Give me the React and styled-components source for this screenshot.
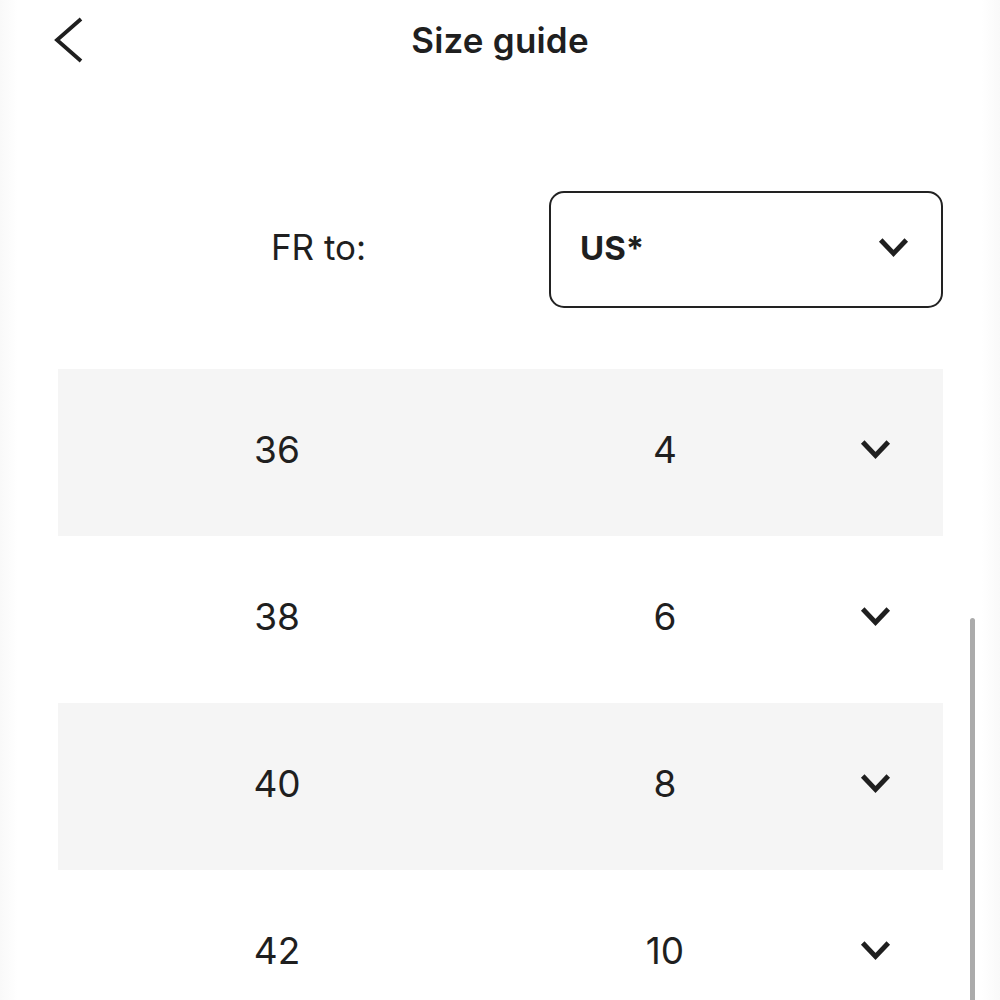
import React from "react";
import styled, { createGlobalStyle } from "styled-components";

const GlobalStyle = createGlobalStyle`
  html, body {
    margin: 0;
    padding: 0;
    background: #ffffff;
    font-family: Inter, "Noto Sans", sans-serif;
    color: #1f1f1f;
  }
`;

const Screen = styled.div`
  width: 1000px;
  height: 1000px;
  overflow: hidden;
  position: relative;
  background: linear-gradient(
    to right,
    #f9f9f9 0px,
    #ffffff 18px,
    #ffffff 982px,
    #f9f9f9 1000px
  );
`;

const Header = styled.header`
  height: 80px;
  display: grid;
  grid-template-columns: 120px 1fr 120px;
  align-items: center;
`;

const BackButton = styled.button`
  border: none;
  background: none;
  padding: 0 0 0 52px;
  height: 80px;
  display: flex;
  align-items: center;
  cursor: pointer;
  color: #1f1f1f;
`;

const Title = styled.h1`
  margin: 0;
  text-align: center;
  font-size: 35px;
  font-weight: 600;
  letter-spacing: 0.2px;
`;

const Content = styled.main`
  padding: 111px 57px 0 58px;
`;

const ConvertRow = styled.div`
  display: flex;
  align-items: center;
  margin-bottom: 61px;
`;

const Label = styled.div`
  width: 461px;
  padding-left: 30px;
  padding-bottom: 6px;
  text-align: center;
  font-size: 35px;
  font-weight: 400;
`;

const Select = styled.div`
  flex: 1;
  height: 117px;
  box-sizing: border-box;
  border: 2px solid #222;
  border-radius: 15px;
  display: flex;
  align-items: center;
  justify-content: space-between;
  padding: 0 32px 4px 29px;
  font-size: 33px;
  font-weight: 700;
`;

const Row = styled.div`
  height: 167px;
  box-sizing: border-box;
  padding-bottom: 6px;
  display: grid;
  grid-template-columns: 438px 338px 82px 1fr;
  align-items: center;
  background: ${(p) => (p.$shaded ? "#f5f5f5" : "#ffffff")};
`;

const Cell = styled.div`
  text-align: center;
  font-size: 37px;
  font-weight: 400;
`;

const IconCell = styled.div`
  display: flex;
  justify-content: center;
  align-items: center;
`;

const Scrollbar = styled.div`
  position: absolute;
  right: 25px;
  top: 618px;
  width: 5px;
  height: 400px;
  border-radius: 3px;
  background: #ababab;
`;

const Chevron = ({ size = 30 }) => (
  <svg width={size} height={size * 0.66} viewBox="0 0 30 20" fill="none">
    <path
      d="M2.5 3 L15 16 L27.5 3"
      stroke="#1f1f1f"
      strokeWidth="4.8"
      strokeLinecap="butt"
      strokeLinejoin="miter"
    />
  </svg>
);

const BackIcon = () => (
  <svg width="32" height="48" viewBox="0 0 32 48" fill="none">
    <path
      d="M29 3 L5 24 L29 45"
      stroke="#1f1f1f"
      strokeWidth="3.8"
      strokeLinecap="butt"
      strokeLinejoin="miter"
    />
  </svg>
);

const sizes = [
  { fr: "36", us: "4" },
  { fr: "38", us: "6" },
  { fr: "40", us: "8" },
  { fr: "42", us: "10" },
];

export default function App() {
  return (
    <Screen>
      <GlobalStyle />
      <Header>
        <BackButton aria-label="Back">
          <BackIcon />
        </BackButton>
        <Title>Size guide</Title>
        <div />
      </Header>
      <Content>
        <ConvertRow>
          <Label>FR to:</Label>
          <Select>
            <span>US*</span>
            <Chevron size={31} />
          </Select>
        </ConvertRow>
        {sizes.map((s, i) => (
          <Row key={s.fr} $shaded={i % 2 === 0}>
            <Cell>{s.fr}</Cell>
            <Cell>{s.us}</Cell>
            <IconCell>
              <Chevron size={31} />
            </IconCell>
            <div />
          </Row>
        ))}
      </Content>
      <Scrollbar />
    </Screen>
  );
}
